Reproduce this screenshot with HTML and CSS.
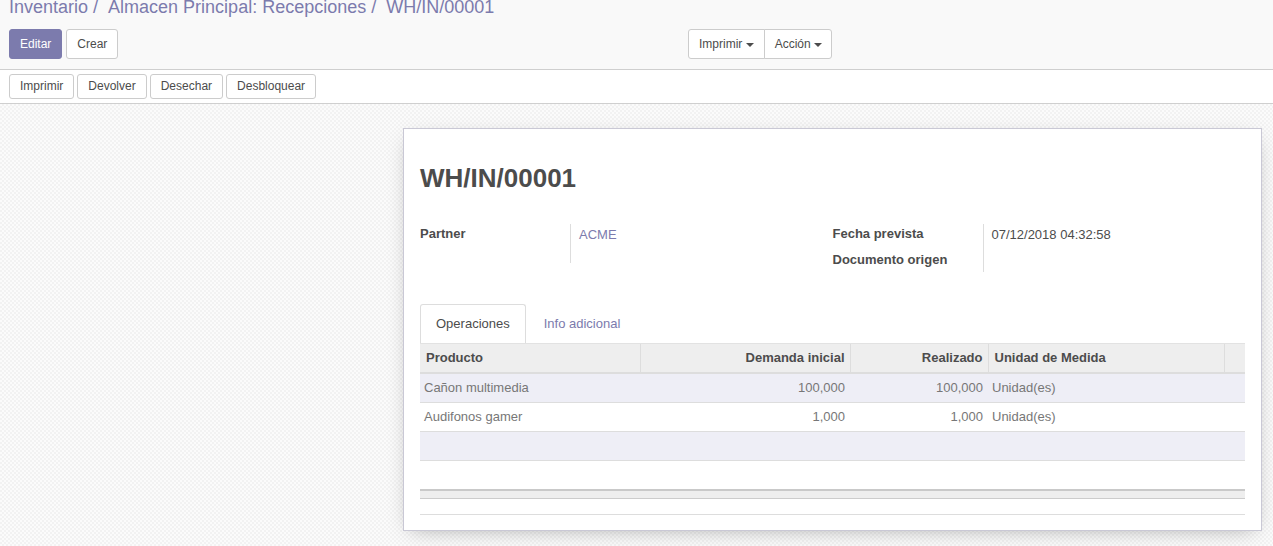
FILE: index.html
```html
<!DOCTYPE html>
<html lang="es">
<head>
<meta charset="utf-8">
<title>WH/IN/00001</title>
<link rel="stylesheet" href="styles.css">
</head>
<body>
<div class="control-panel">
  <ol class="breadcrumb">
    <li><a>Inventario</a></li>
    <li><a>Almacen Principal: Recepciones</a></li>
    <li class="active">WH/IN/00001</li>
  </ol>
  <div class="cp-row">
    <div class="cp-buttons">
      <button class="btn btn-primary">Editar</button>
      <button class="btn btn-default">Crear</button>
    </div>
    <div class="btn-group">
      <button class="btn btn-default">Imprimir <span class="caret"></span></button>
      <button class="btn btn-default">Acción <span class="caret"></span></button>
    </div>
  </div>
</div>
<div class="statusbar">
  <button class="btn btn-default btn-xs">Imprimir</button>
  <button class="btn btn-default btn-xs">Devolver</button>
  <button class="btn btn-default btn-xs">Desechar</button>
  <button class="btn btn-default btn-xs">Desbloquear</button>
</div>
<div class="sheet-bg">
  <div class="sheet">
    <h1 class="title">WH/IN/00001</h1>
    <div class="groups">
      <div class="group group-left">
        <div class="label">Partner</div>
        <div class="value tall"><a class="link">ACME</a></div>
      </div>
      <div class="group group-right">
        <div class="label r1">Fecha prevista</div>
        <div class="value span2">07/12/2018 04:32:58</div>
        <div class="label r2">Documento origen</div>
      </div>
    </div>
    <div class="notebook">
      <ul class="nav-tabs">
        <li class="tab active">Operaciones</li>
        <li class="tab">Info adicional</li>
      </ul>
      <table class="list">
        <colgroup>
          <col style="width:220px">
          <col style="width:210px">
          <col style="width:138px">
          <col style="width:236px">
          <col>
        </colgroup>
        <thead>
          <tr>
            <th>Producto</th>
            <th class="num">Demanda inicial</th>
            <th class="num">Realizado</th>
            <th>Unidad de Medida</th>
            <th></th>
          </tr>
        </thead>
        <tbody>
          <tr class="odd">
            <td>Cañon multimedia</td>
            <td class="num">100,000</td>
            <td class="num">100,000</td>
            <td>Unidad(es)</td>
            <td></td>
          </tr>
          <tr>
            <td>Audifonos gamer</td>
            <td class="num">1,000</td>
            <td class="num">1,000</td>
            <td>Unidad(es)</td>
            <td></td>
          </tr>
          <tr class="odd"><td>&nbsp;</td><td></td><td></td><td></td><td></td></tr>
          <tr><td>&nbsp;</td><td></td><td></td><td></td><td></td></tr>
        </tbody>
        <tfoot>
          <tr><td></td><td></td><td></td><td></td><td></td></tr>
        </tfoot>
      </table>
      <div class="sep"></div>
    </div>
  </div>
</div>
</body>
</html>
```

FILE: styles.css
```css
* { box-sizing: border-box; }
html, body { margin: 0; padding: 0; }
body {
  font-family: "Liberation Sans", Arial, Helvetica, sans-serif;
  font-size: 13px;
  line-height: 18px;
  color: #4c4c4c;
  background: #fff;
  overflow: hidden;
  height: 546px;
}

/* control panel */
.control-panel {
  display: flow-root;
  background: #f9f9f9;
  border-bottom: 1px solid #cfcfcf;
  height: 70px;
  padding: 0 9px;
}
.breadcrumb {
  list-style: none;
  margin: -3px 0 0 0;
  padding: 0;
  font-size: 18px;
  line-height: 20px;
  display: flex;
  color: #7c7bad;
}
.breadcrumb li + li::before {
  content: "/\00a0";
  padding: 0 5px;
  color: #7c7bad;
}
.breadcrumb a { color: #7c7bad; }
.breadcrumb .active { color: #7c7bad; }

.cp-row {
  display: grid;
  grid-template-columns: 679px auto;
  margin-top: 12px;
}
.cp-buttons { display: flex; gap: 4px; }

.btn {
  font-family: inherit;
  font-size: 12px;
  line-height: 18px;
  padding: 5px 10px;
  border-radius: 3px;
  border: 1px solid #ccc;
  background: #fff;
  color: #4c4c4c;
  margin: 0;
  cursor: pointer;
}
.btn-primary {
  background: #7c7bad;
  border-color: #7c7bad;
  color: #fff;
}
.btn-group { display: flex; }
.btn-group .btn { border-radius: 0; }
.btn-group .btn:first-child { border-radius: 3px 0 0 3px; }
.btn-group .btn:last-child { border-radius: 0 3px 3px 0; margin-left: -1px; padding-right: 9px; }
.caret {
  display: inline-block;
  width: 0; height: 0;
  margin-left: 0;
  vertical-align: middle;
  border-top: 4px solid #4c4c4c;
  border-left: 4px solid transparent;
  border-right: 4px solid transparent;
}

/* statusbar */
.statusbar {
  background: #fff;
  border-bottom: 1px solid #cfcfcf;
  height: 34px;
  padding: 4px 9px 0;
  display: flex;
  gap: 3px;
  align-items: flex-start;
}
.btn-xs {
  padding: 3px 10px;
  line-height: 17px;
  height: 25px;
}

/* sheet background */
.sheet-bg {
  background-color: #f8f8f8;
  background-image: repeating-conic-gradient(#f2f2f2 0 25%, #fbfbfb 0 50%);
  background-size: 4px 4px;
  padding: 24px 11px 40px 0;
  display: flex;
  justify-content: flex-end;
  height: 442px;
}
.sheet {
  width: 859px;
  height: 403px;
  background: #fff;
  border: 1px solid #c9c8d5;
  box-shadow: 0 5px 20px -8px rgba(0,0,0,0.35);
  padding: 34px 16px 0 16px;
}
.title {
  margin: 0;
  font-size: 26px;
  line-height: 30px;
  font-weight: bold;
  color: #4c4c4c;
}

/* groups */
.groups {
  display: grid;
  grid-template-columns: 1fr 1fr;
  margin-top: 31px;
}
.group {
  display: grid;
  grid-template-columns: 150px 1fr;
}
.group-left { grid-template-rows: 39px; }
.group-right { grid-template-rows: 26px 22px; }
.label {
  font-weight: bold;
  color: #4c4c4c;
  padding-top: 1px;
}
.value {
  border-left: 1px solid #ddd;
  padding: 2px 0 0 8px;
}
.value.span2 { grid-row: 1 / span 2; grid-column: 2; }
.label.r1 { grid-row: 1; grid-column: 1; }
.label.r2 { grid-row: 2; grid-column: 1; }
.link { color: #7c7bad; }

/* notebook */
.notebook { margin-top: 32px; }
.nav-tabs {
  list-style: none;
  margin: 0;
  padding: 0;
  display: flex;
  height: 39px;
}
.tab {
  padding: 10px 15px;
  line-height: 18px;
  margin-right: 2px;
  border: 1px solid transparent;
  border-bottom: 0;
  border-radius: 3px 3px 0 0;
  color: #7c7bad;
}
.tab.active {
  color: #4c4c4c;
  border-color: #ddd;
  background: #fff;
}

.list {
  width: 100%;
  border-collapse: collapse;
  table-layout: fixed;
}
.list th {
  background: #eee;
  font-weight: bold;
  color: #4c4c4c;
  text-align: left;
  padding: 5px 5px 5px 6px;
  line-height: 18px;
  border-top: 1px solid #e2e2e2;
  border-bottom: 2px solid #ddd;
  border-left: 1px solid #ddd;
}
.list th:first-child { border-left: 0; }
.list td {
  padding: 5px 5px 5px 4px;
  line-height: 18px;
  height: 29px;
  color: #777;
  border-top: 1px solid #ddd;
  white-space: nowrap;
}
.list .num { text-align: right; }
.list tbody tr.odd td { background: #eeeef6; }
.list tbody tr:last-child td { border-bottom: 1px solid #eee; }
.list tfoot td {
  height: 8px;
  padding: 0;
  background: #eee;
  border-top: 2px solid #c9c9c9;
  border-bottom: 1px solid #ccc;
}
.sep {
  margin-top: 15px;
  border-top: 1px solid #ddd;
}
```
